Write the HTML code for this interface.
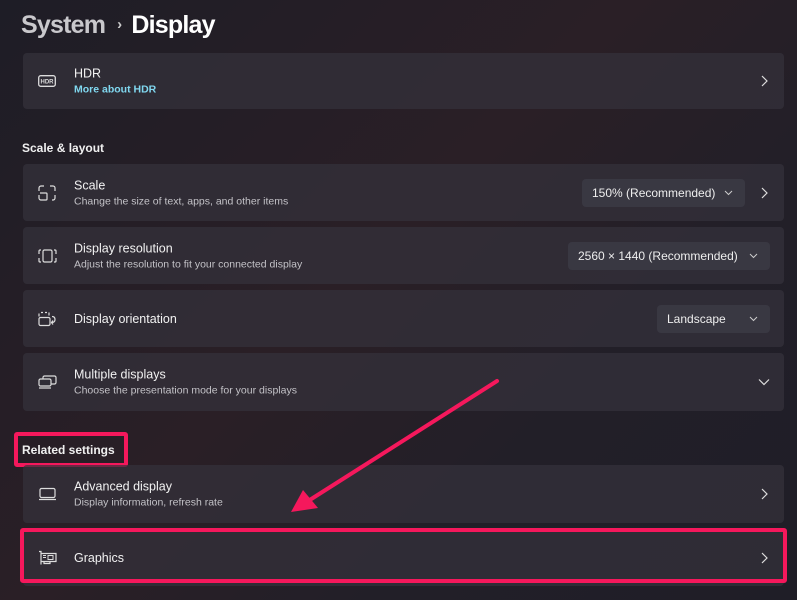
<!DOCTYPE html>
<html><head><meta charset="utf-8"><style>
*{margin:0;padding:0;box-sizing:border-box}
body{width:797px;height:600px;overflow:hidden;background:linear-gradient(135deg,#1e1d26 0%,#2a1f26 45%,#221f28 70%,#1f1e27 100%);font-family:"Liberation Sans",sans-serif;color:#fff;position:relative}
.t{position:absolute;top:11px;left:21px;font-size:25px;font-weight:600;letter-spacing:-0.8px;white-space:nowrap}
.t .s{color:#c9c8cc}.t .c{font-size:15px;color:#ccc;margin:0 10px 0 12px;position:relative;top:-4px}
.card{position:absolute;left:23px;width:761px;background:rgba(52,50,60,0.72);border-radius:4px}
.ic{position:absolute;left:15px;top:50%;transform:translateY(-50%)}
.tx{position:absolute;left:51px;top:50%;transform:translateY(-50%)}
.h{font-size:12.5px;color:#f2f2f2}
.sub{font-size:10.5px;color:#c3c2c7;margin-top:3px}
.lnk{font-size:10.5px;color:#80d8f0;font-weight:bold;margin-top:3px}
.chev{position:absolute;right:16px;top:50%;transform:translateY(-50%)}
.dd{position:absolute;top:50%;transform:translateY(-50%);height:28px;background:#393842;border-radius:4px;font-size:12px;color:#eee;line-height:28px;padding-left:10px}
.dd svg{position:absolute;right:12px;top:11px}
.sec{position:absolute;left:22px;font-size:12px;font-weight:bold;color:#f0f0f0}
.red{position:absolute;border:4px solid #f5185c;border-radius:3px}
</style></head><body>
<div class="t"><span class="s">System</span><span class="c">›</span>Display</div>

<div class="card" style="top:53px;height:56px">
<svg class="ic" width="18" height="12" viewBox="0 0 18 12"><rect x="0.7" y="0.7" width="16.6" height="10.6" rx="2" fill="none" stroke="#ddd" stroke-width="1.3"/><text x="9" y="8.5" font-size="6" font-weight="bold" fill="#ddd" text-anchor="middle" font-family="Liberation Sans">HDR</text></svg>
<div class="tx"><div class="h">HDR</div><div class="lnk">More about HDR</div></div>
<svg class="chev" width="8" height="12" viewBox="0 0 8 12"><path d="M2 1l5 5-5 5" fill="none" stroke="#ddd" stroke-width="1.2"/></svg>
</div>

<div class="sec" style="top:141px">Scale &amp; layout</div>

<div class="card" style="top:164px;height:57px">
<svg class="ic" width="18" height="16" viewBox="0 0 18 16"><path d="M1 6V3a2 2 0 012-2h3M12 1h3a2 2 0 012 2v3M17 10v3a2 2 0 01-2 2h-1M1 10v3a2 2 0 002 2h5a1 1 0 001-1V9a1 1 0 00-1-1H2" fill="none" stroke="#ddd" stroke-width="1.2"/></svg>
<div class="tx"><div class="h">Scale</div><div class="sub">Change the size of text, apps, and other items</div></div>
<div class="dd" style="left:559px;width:163px">150% (Recommended)<svg width="9" height="6" viewBox="0 0 9 6"><path d="M1 1l3.5 3.5L8 1" fill="none" stroke="#ccc" stroke-width="1"/></svg></div>
<svg class="chev" width="8" height="12" viewBox="0 0 8 12"><path d="M2 1l5 5-5 5" fill="none" stroke="#ddd" stroke-width="1.2"/></svg>
</div>

<div class="card" style="top:227px;height:57px">
<svg class="ic" width="19" height="14" viewBox="0 0 19 14"><rect x="5" y="1" width="9" height="12" rx="1.5" fill="none" stroke="#ddd" stroke-width="1.2"/><path d="M3 1H2a1 1 0 00-1 1v3M1 9v3a1 1 0 001 1h1M16 1h1a1 1 0 011 1v3M18 9v3a1 1 0 01-1 1h-1" fill="none" stroke="#ddd" stroke-width="1.2"/></svg>
<div class="tx"><div class="h">Display resolution</div><div class="sub">Adjust the resolution to fit your connected display</div></div>
<div class="dd" style="left:545px;width:202px">2560 × 1440 (Recommended)<svg width="9" height="6" viewBox="0 0 9 6"><path d="M1 1l3.5 3.5L8 1" fill="none" stroke="#ccc" stroke-width="1"/></svg></div>
</div>

<div class="card" style="top:290px;height:57px">
<svg class="ic" width="19" height="15" viewBox="0 0 19 15"><rect x="1" y="6" width="11" height="8" rx="1.5" fill="none" stroke="#ddd" stroke-width="1.2"/><path d="M1 5V2M3 1h2M7 1h2M11 1v3M14 5c2 0 3 1 3 3s-1 3-3 3M15 9l-1.5 2 1.5 2" fill="none" stroke="#ddd" stroke-width="1.2"/></svg>
<div class="tx"><div class="h">Display orientation</div></div>
<div class="dd" style="left:634px;width:113px">Landscape<svg width="9" height="6" viewBox="0 0 9 6"><path d="M1 1l3.5 3.5L8 1" fill="none" stroke="#ccc" stroke-width="1"/></svg></div>
</div>

<div class="card" style="top:353px;height:58px">
<svg class="ic" width="19" height="14" viewBox="0 0 19 14"><rect x="5" y="1" width="13" height="8" rx="1.5" fill="none" stroke="#ddd" stroke-width="1.2"/><rect x="1" y="4" width="12" height="7" rx="1.5" fill="#2f2d36" stroke="#ddd" stroke-width="1.2"/><path d="M1 13h12" stroke="#ddd" stroke-width="1.2"/></svg>
<div class="tx"><div class="h">Multiple displays</div><div class="sub">Choose the presentation mode for your displays</div></div>
<svg class="chev" style="right:14px" width="12" height="8" viewBox="0 0 12 8"><path d="M1 1.5l5 5 5-5" fill="none" stroke="#ddd" stroke-width="1.2"/></svg>
</div>

<div class="sec" style="top:443px">Related settings</div>
<div class="red" style="left:14px;top:432px;width:114px;height:35px"></div>

<div class="card" style="top:465px;height:58px">
<svg class="ic" width="19" height="13" viewBox="0 0 19 13"><rect x="2" y="1" width="15" height="9" rx="1.5" fill="none" stroke="#ddd" stroke-width="1.2"/><path d="M1 12h17" stroke="#ddd" stroke-width="1.2"/></svg>
<div class="tx"><div class="h">Advanced display</div><div class="sub">Display information, refresh rate</div></div>
<svg class="chev" width="8" height="12" viewBox="0 0 8 12"><path d="M2 1l5 5-5 5" fill="none" stroke="#ddd" stroke-width="1.2"/></svg>
</div>

<div class="card" style="top:529px;height:57px">
<svg class="ic" width="19" height="15" viewBox="0 0 19 15"><path d="M1 1h2v13M3 3h15v8H3M6 11v2h6v-2" fill="none" stroke="#ddd" stroke-width="1.2"/><rect x="10" y="5" width="5" height="4" fill="none" stroke="#ddd" stroke-width="1"/><path d="M5 5h3M5 7h3" stroke="#ddd" stroke-width="1"/></svg>
<div class="tx"><div class="h">Graphics</div></div>
<svg class="chev" width="8" height="12" viewBox="0 0 8 12"><path d="M2 1l5 5-5 5" fill="none" stroke="#ddd" stroke-width="1.2"/></svg>
</div>
<div class="red" style="left:20px;top:528px;width:767px;height:55px"></div>

<svg style="position:absolute;left:0;top:0" width="797" height="600"><path d="M497 381L305 503" stroke="#f5185c" stroke-width="4" stroke-linecap="round"/><polygon points="291,512 303,490 318,508" fill="#f5185c"/></svg>
</body></html>
